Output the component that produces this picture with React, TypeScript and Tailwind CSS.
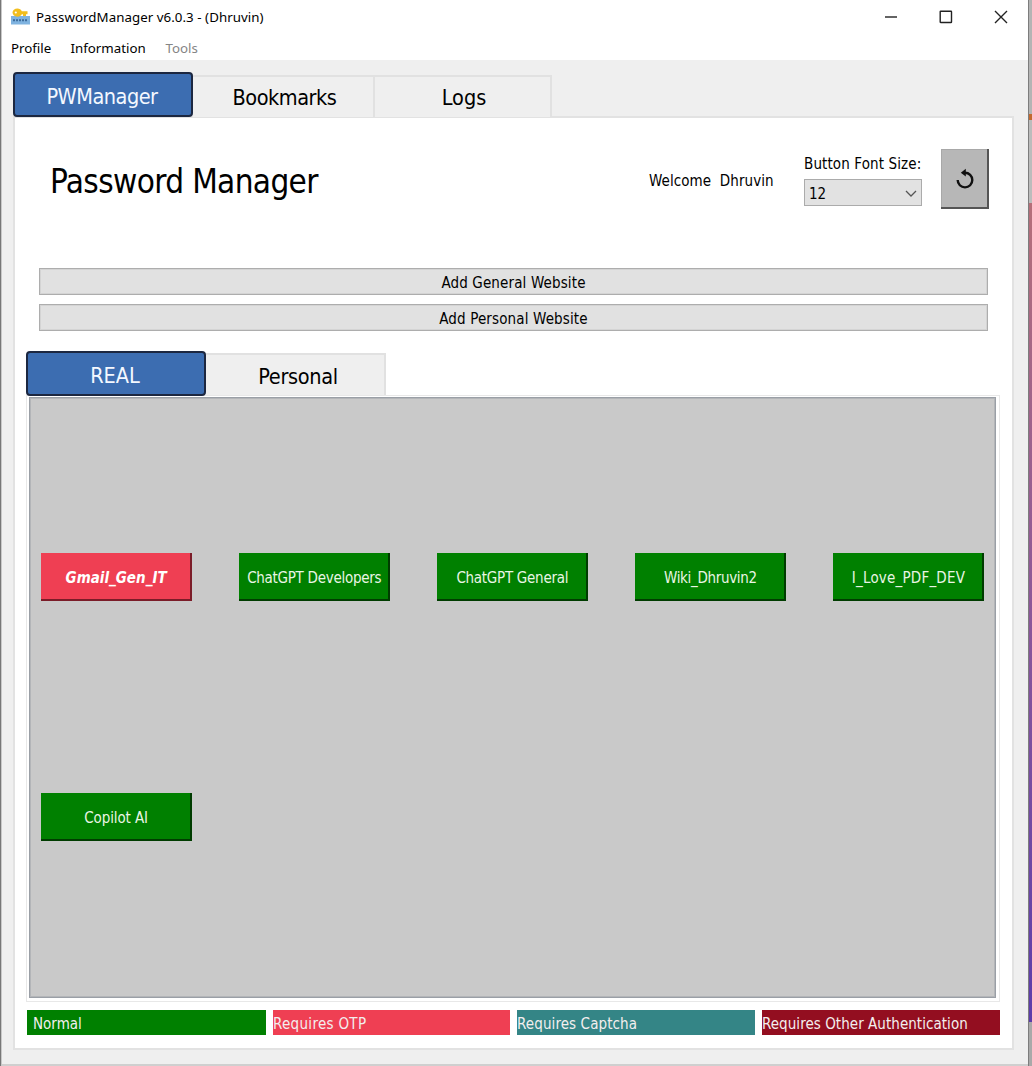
import React from "react";

const tahoma = "font-['DejaVu_Sans_Condensed','DejaVu_Sans',sans-serif] font-stretch-condensed";

function Label({ children, className = "" }: { children: React.ReactNode; className?: string }) {
  return <span className={`whitespace-pre ${className}`}>{children}</span>;
}

function TitleBar() {
  return (
    <header className="flex h-8 items-center bg-white pl-[9px] font-['Noto_Sans',sans-serif] text-[13.3px] text-black">
      <svg width="19" height="17" viewBox="0 0 19 17" className="mr-[6px]">
        <rect x="0" y="8" width="19" height="8.5" fill="#7fb3e0" />
        <path d="M2 12.200h15" stroke="#3c6c9c" strokeWidth="2" strokeDasharray="2 1" />
        <path d="M6.500 0.500C3.500 .5 1.500 2.300 1.500 4.500s2 4.200 5 4.200c2 0 3.600-1.100 4.300-2.500H12v1.800h3V6.200h1.500V3.200h-5.700C10 1.500 8.500 .5 6.500 .5Z" fill="#f2be1e" />
        <circle cx="4.800" cy="4.500" r="1.100" fill="#fff" />
      </svg>
      <Label className="mt-[3px] tracking-[0.050px]">PasswordManager v6.0.3 - (Dhruvin)</Label>
      <div className="ml-auto flex items-center gap-[41px] pr-[20px] pt-[2px]">
        <svg width="13" height="14" viewBox="0 0 13 14" stroke="#222" strokeWidth="1.400"><path d="M0 7h12" /></svg>
        <svg width="14" height="14" viewBox="0 0 14 14" fill="none" stroke="#222" strokeWidth="1.400"><rect x="1.200" y="1.200" width="11.300" height="11.300" rx=".5" /></svg>
        <svg width="14" height="14" viewBox="0 0 14 14" stroke="#222" strokeWidth="1.400"><path d="m1 1 12 12M13 1 1 13" /></svg>
      </div>
    </header>
  );
}

function MenuBar() {
  return (
    <nav className="flex h-[28px] items-center bg-white pt-[5px] pl-[9px] font-['Noto_Sans',sans-serif] text-[13.3px] text-black">
      <Label className="w-[59.500px]">Profile</Label>
      <Label className="w-[95px]">Information</Label>
      <Label className="text-[#858585]">Tools</Label>
    </nav>
  );
}

function Tab({ label, active, className = "", text = "" }: { label: string; active?: boolean; className?: string; text?: string }) {
  return active ? (
    <button className={`flex h-[45px] w-[180px] shrink-0 items-center justify-center rounded-[4px] border-2 border-[#1c2740] bg-[#3c6db1] pt-[5px] pr-[2px] text-[21.500px] text-[#f4f8ff] ${className}`}>
      <Label className={text}>{label}</Label>
    </button>
  ) : (
    <button className={`flex h-[42px] shrink-0 items-center justify-center border-t-2 border-r-2 border-[#e1e1e1] bg-[#efefef] pt-[2px] text-[21.500px] text-black ${className}`}>
      <Label className={text}>{label}</Label>
    </button>
  );
}

function PageHeader() {
  return (
    <div className="flex h-[60px] items-start pl-[25px]">
      <h1 className="mt-[13px] text-[33px] leading-[40px] tracking-[-0.640px] text-black"><Label>Password Manager</Label></h1>
      <div className="ml-auto flex text-[15px] text-black">
        <Label className="mt-[22px] w-[156px] pl-px leading-[20px] tracking-[0.070px]">Welcome  Dhruvin</Label>
        <div className="w-[137px]">
          <div className="mt-[5px] leading-[20px] tracking-[0.120px]"><Label>Button Font Size:</Label></div>
          <div className="mt-[5px] flex h-[27px] w-[118px] items-center justify-between border border-[#ababab] bg-[#e2e2e2] px-[4px]">
            <Label className="mt-[3px]">12</Label>
            <svg width="12" height="8" viewBox="0 0 12 8" className="mt-[3px]" fill="none" stroke="#555" strokeWidth="1.300"><path d="m1 1 5 5 5-5" /></svg>
          </div>
        </div>
        <button className="flex h-[60px] w-[48px] items-center justify-center border-r-2 border-b-2 border-[#555] bg-[#b7b7b7] pt-[2px] pl-[2px] shadow-[inset_1px_1px_0_#a8a8a8]">
          <svg width="20" height="22" viewBox="0 0 20 22" fill="none" stroke="#111" strokeWidth="2.400">
            <path d="M8.500 4.800h1.500a7.300 7.300 0 1 1-7.300 7.300" />
            <path d="M10.800 .8 5.800 4.800 10.800 8.500Z" fill="#111" stroke="none" />
          </svg>
        </button>
      </div>
    </div>
  );
}

function WideButton({ children }: { children: React.ReactNode }) {
  return (
    <button className="flex h-[27px] items-center justify-center border border-[#adadad] bg-[#e1e1e1] pt-[4px] text-[15px] tracking-[0.140px] text-black shadow-[inset_0_0_0_1px_#d4d4d4]">
      <Label>{children}</Label>
    </button>
  );
}

function SiteButton({ label, otp, text = "" }: { label: string; otp?: boolean; text?: string }) {
  const tone = otp
    ? "border-r-[#7b1c28] border-b-[#7b1c28] bg-[#ef3f53] font-bold italic text-white"
    : "border-r-[#003c00] border-b-[#003c00] bg-[#008000] text-[#e9f5e4]";
  return (
    <button className={`flex h-[48px] w-[151px] items-center justify-center border-r-2 border-b-2 pt-[4px] pl-[2px] text-[15px] ${tone}`}>
      <Label className={text}>{label}</Label>
    </button>
  );
}

export default function App() {
  return (
    <div className={`flex h-[1066px] w-[1032px] overflow-hidden bg-[#efefef] ${tahoma}`}>
      <div className="w-px bg-[#777]" />
      <div className="w-px bg-[#c8c8c8]" />
      <div className="flex w-[1026px] flex-col border-t border-[#ddd]">
        <div className="-mt-px"><TitleBar /></div>
        <MenuBar />
        <main className="flex grow flex-col bg-[#efefef] pt-[12px] pr-[14px] pl-[11px]">
          <div className="relative z-10 flex h-[45px] items-start">
            <Tab label="PWManager" active text="tracking-[-0.500px]" />
            <Tab label="Bookmarks" className="mt-[3px] w-[182px] pl-[3px]" text="tracking-[-0.450px]" />
            <Tab label="Logs" className="mt-[3px] w-[177px] pl-[3px]" />
          </div>
          <section className="-mt-px flex h-[934px] flex-col border-2 border-[#e2e2e2] bg-white px-[11px]">
            <div className="-ml-px pt-[31px] pr-[12px]"><PageHeader /></div>
            <div className="mt-[59px] mr-[13px] ml-[13px] flex flex-col gap-[9px]">
              <WideButton>Add General Website</WideButton>
              <WideButton>Add Personal Website</WideButton>
            </div>
            <div className="relative z-10 mt-[20px] flex h-[45px] items-start">
              <Tab label="REAL" active />
              <Tab label="Personal" className="mt-[2px] w-[180px] pt-[4px] pl-[6px]" text="tracking-[-0.350px]" />
            </div>
            <div className="-mt-px mr-[1px] h-[607px] border border-[#e8e8e8] p-px">
              <div className="ml-px grid h-[601px] w-[967px] grid-cols-[repeat(5,198.100px)] content-start gap-y-[192px] overflow-hidden border border-[#9a9fa6] bg-[#c9c9c9] pt-[155px] pl-[10.600px] shadow-[inset_0_0_0_1px_#b3b5b8]">
                <SiteButton label="Gmail_Gen_IT" otp />
                <SiteButton label="ChatGPT Developers" text="tracking-[-0.280px]" />
                <SiteButton label="ChatGPT General" text="tracking-[-0.270px]" />
                <SiteButton label="Wiki_Dhruvin2" text="tracking-[-0.320px]" />
                <SiteButton label="I_Love_PDF_DEV" text="tracking-[0.200px]" />
                <SiteButton label="Copilot AI" text="tracking-[-0.100px]" />
              </div>
            </div>
            <footer className="mt-[8px] ml-px flex h-[25px] gap-[7px] text-[15px] leading-[28px] text-[#f3eeee]">
              <div className="w-[239px] bg-[#008000] pl-[6px]"><Label>Normal</Label></div>
              <div className="w-[237px] bg-[#ef3f53]"><Label className="tracking-[0.300px]">Requires OTP</Label></div>
              <div className="w-[238px] bg-[#348586]"><Label className="tracking-[0.100px]">Requires Captcha</Label></div>
              <div className="w-[238px] bg-[#930e20]"><Label className="tracking-[0.050px]">Requires Other Authentication</Label></div>
            </footer>
          </section>
        </main>
        <div className="h-[2px] bg-[#cfcfcf]" />
      </div>
      <div className="w-px bg-[#7d7d7d]" />
      <div className="flex grow flex-col bg-[#a9a9a9]">
        <div className="h-[114px] bg-[#b4b4b4]" />
        <div className="h-[6px] bg-[#c2692f]" />
        <div className="h-[83px] bg-[#bcbcbc]" />
        <div className="h-[819px] bg-linear-to-b from-[#b56f79] via-[#8c5799] to-[#5c3caa]" />
      </div>
    </div>
  );
}
